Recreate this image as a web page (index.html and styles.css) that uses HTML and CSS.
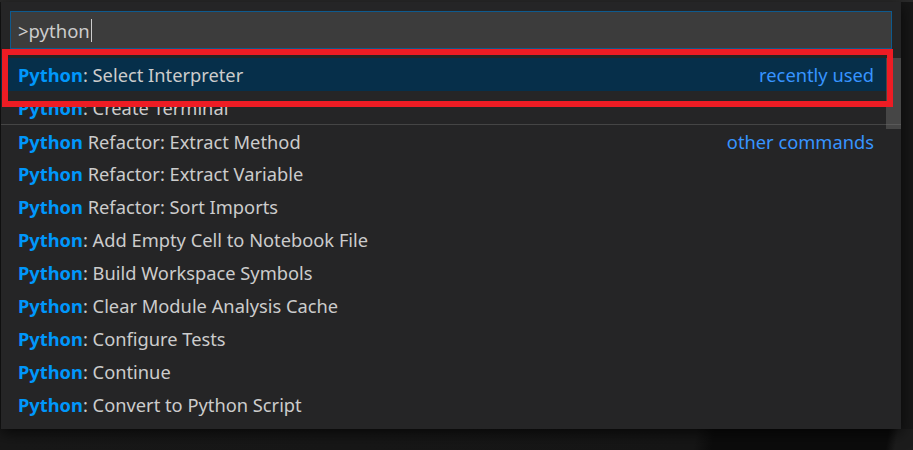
FILE: index.html
```html
<!DOCTYPE html>
<html>
<head>
<meta charset="utf-8">
<link rel="stylesheet" href="styles.css">
</head>
<body>
<div class="stage">
  <div class="palette">
    <div class="input-wrap">
      <div class="input"><span class="query">&gt;python</span><span class="caret"></span></div>
    </div>
    <div class="list">
      <div class="row selected"><span class="label"><b>Python</b>: Select Interpreter</span><span class="desc">recently used</span></div>
      <div class="row"><span class="label"><b>Python</b>: Create Terminal</span></div>
      <div class="row sep"><span class="label"><b>Python</b> Refactor: Extract Method</span><span class="desc">other commands</span></div>
      <div class="row"><span class="label"><b>Python</b> Refactor: Extract Variable</span></div>
      <div class="row"><span class="label"><b>Python</b> Refactor: Sort Imports</span></div>
      <div class="row"><span class="label"><b>Python</b>: Add Empty Cell to Notebook File</span></div>
      <div class="row"><span class="label"><b>Python</b>: Build Workspace Symbols</span></div>
      <div class="row"><span class="label"><b>Python</b>: Clear Module Analysis Cache</span></div>
      <div class="row"><span class="label"><b>Python</b>: Configure Tests</span></div>
      <div class="row"><span class="label"><b>Python</b>: Continue</span></div>
      <div class="row"><span class="label"><b>Python</b>: Convert to Python Script</span></div>
      <div class="scrollbar"></div>
    </div>
    <div class="highlight-box"></div>
  </div>
  <div class="backdrop-shape"></div>
</div>
</body>
</html>
```
FILE: styles.css
```css
html, body {
  margin: 0;
  padding: 0;
}
body {
  width: 913px;
  height: 450px;
  overflow: hidden;
  background: #121212;
  font-family: "Noto Sans", "Open Sans", sans-serif;
}
.stage {
  position: relative;
  width: 913px;
  height: 450px;
  background: linear-gradient(#2a2a2a 0, #2a2a2a 2px, #171717 2px);
  padding-top: 2px;
  box-sizing: border-box;
}
.backdrop-shape {
  position: absolute;
  left: 0;
  top: 429px;
  width: 913px;
  height: 21px;
  background: linear-gradient(100deg, #181818 0, #161616 76%, #0c0c0c 78%, #0c0c0c 97%, #1c1c1c 98%);
}
.palette {
  position: relative;
  z-index: 1;
  margin-left: 1px;
  width: 900px;
  height: 427px;
  background: #252526;
  box-shadow: 0 4px 14px rgba(0,0,0,0.7);
}
.input-wrap {
  padding: 9px 9px 9px 9px;
}
.input {
  width: 882px;
  height: 38px;
  background: #3c3c3c;
  border: 1px solid #0e5a8e;
  display: flex;
  align-items: center;
  padding-left: 7px;
  box-sizing: border-box;
}
.query {
  color: #cccccc;
  font-size: 18.5px;
}
.caret {
  display: inline-block;
  width: 1px;
  height: 23px;
  background: #cccccc;
  margin-left: 1px;
}
.list {
  position: relative;
}
.row {
  height: 33px;
  display: flex;
  align-items: center;
  justify-content: space-between;
  padding: 0 27px 0 17px;
  color: #cccccc;
  font-size: 18.3px;
  white-space: nowrap;
}
.row b {
  color: #0097fb;
  font-weight: 700;
}
.row.selected {
  background: #062f4a;
  margin-right: 15px;
  padding-right: 12px;
}
.row.sep {
  border-top: 1px solid #454545;
  height: 32px;
}
.desc {
  color: #3794ff;
}
.scrollbar {
  position: absolute;
  right: 0;
  top: 0;
  width: 15px;
  height: 71px;
  background: rgba(121,121,121,0.4);
}
.highlight-box {
  position: absolute;
  left: 1px;
  top: 47px;
  width: 891px;
  height: 58px;
  border: 6px solid #ed1c24;
  box-sizing: border-box;
}
```
